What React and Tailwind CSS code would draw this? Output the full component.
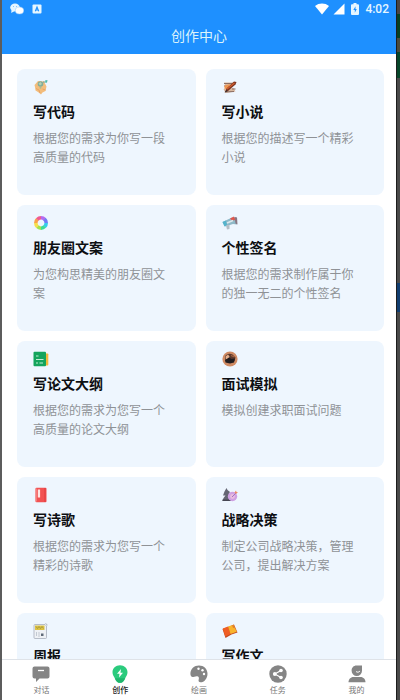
import { useState } from 'react'

function CodeIcon() {
  return (
    <svg viewBox="0 0 16 16" className="w-4 h-4" aria-hidden="true">
      <path d="M1.500 6 5 2l6 .5 2.500 5-1 4.500-3 1.500-1.500 2-3-2.500-2.500-1.500-.5-3.500z" fill="#f3bd7c" />
      <path d="M3 9.500l3 1.500 1 3M9.500 10l3 1" stroke="#e8a566" strokeWidth="1" fill="none" />
      <circle cx="7.500" cy="5" r="2.800" fill="#7fae9c" />
      <path d="M5.500 4.500l2-1.500 1.500 2-2 1.500z" fill="#b8cfae" />
      <circle cx="7.500" cy="8.800" r="1" fill="#a9bd92" />
      <path d="M12 1.500l2.500-.5-.5 2.500-1.500.5z" fill="#4cb9a8" />
      <circle cx="11" cy="3" r=".8" fill="#5b968c" />
    </svg>
  )
}

function NovelIcon() {
  return (
    <svg viewBox="0 0 16 16" className="w-4 h-4" aria-hidden="true">
      <path d="M2 3.500h11l-.5 2.500H3zM1.500 10l10-1 2 3.500-10 1.500z" fill="#d8b8a0" />
      <path d="M2 4.500h8M2 7h5M3 13l9-.5M10 10h3.500" stroke="#8b6d62" strokeWidth="1" />
      <path d="M2.500 6.500l6-1.500-2.500 4.500-3.500.5z" fill="#ef9550" />
      <path d="M3 13 4.500 9.500l7.500-7 2.500.5-1 2.500-7.500 6.500z" fill="#7c3520" />
      <path d="M5 10 12.500 4" stroke="#d35d2d" strokeWidth="1.200" />
      <path d="M2.500 13.500l2-2.500 1.200 1.200z" fill="#332c2b" />
    </svg>
  )
}

function MomentsIcon() {
  return (
    <svg viewBox="0 0 16 16" className="w-4 h-4" fill="none" strokeWidth="3.600" aria-hidden="true">
      <path d="M8 2.800a5.200 5.200 0 0 1 3.800 1.600" stroke="#b56bf0" />
      <path d="M11.500 4.200A5.200 5.200 0 0 1 13.200 8" stroke="#6f7df5" />
      <path d="M13.200 8a5.200 5.200 0 0 1-1.600 3.800" stroke="#35cdea" />
      <path d="M11.700 11.600A5.200 5.200 0 0 1 8 13.200" stroke="#3ddc97" />
      <path d="M8 13.200a5.200 5.200 0 0 1-3.700-1.600" stroke="#a5e24d" />
      <path d="M4.400 11.700A5.200 5.200 0 0 1 2.800 8" stroke="#f7df4b" />
      <path d="M2.800 8a5.200 5.200 0 0 1 1.600-3.700" stroke="#f9a14a" />
      <path d="M4.300 4.400A5.200 5.200 0 0 1 8 2.800" stroke="#ef5b91" />
    </svg>
  )
}

function SignatureIcon() {
  return (
    <svg viewBox="0 0 16 16" className="w-4 h-4" aria-hidden="true">
      <path d="M.5 7l9.500-4.500 4.500 0 .5 7-4-.5-8 2.500z" fill="#8fb9c8" />
      <path d="M.5 7l3.500-1.500 1 4.500-2.500 1.500z" fill="#55b4cc" />
      <path d="M8 3.500l4-2 1.500 3.500-3.500.5z" fill="#e0574c" />
      <path d="M12.500 2l2.500.5.500 7-2-1z" fill="#8a7682" />
      <path d="M5 8l6-2.500" stroke="#dce8ec" strokeWidth="1.500" />
      <path d="M4 10.500l1 4 2.500-.5L7.500 10z" fill="#b5bec5" />
    </svg>
  )
}

function OutlineIcon() {
  return (
    <svg viewBox="0 0 16 16" className="w-4 h-4" aria-hidden="true">
      <path d="M11 2.500h3.500a.8.8 0 0 1 .8.800v10.500a.8.8 0 0 1-.8.800H11z" fill="#f2b83a" />
      <rect x=".5" y=".8" width="12.500" height="14.400" rx="1" fill="#14a45c" />
      <path d="M3 5h2.500M3 8.500h7.500M3 12h2M6.500 12H10" stroke="#c2ebd2" strokeWidth="1.100" />
    </svg>
  )
}

function InterviewIcon() {
  return (
    <svg viewBox="0 0 16 16" className="w-4 h-4" aria-hidden="true">
      <circle cx="8" cy="8" r="7.600" fill="#cf8a63" />
      <path d="M3 5.500C4.500 2.500 8 2 10.500 3.500l3 3-1 3.500-4.500 1-4.500-1z" fill="#5a382c" />
      <path d="M3.500 5.500l2.500-2 1.500 2-1 2.500-2.500.5z" fill="#e6b08c" />
      <path d="M3 9l4-2.500L9.500 8l3.500-.5-1 4-4 1-4.500-1z" fill="#211d20" />
      <path d="M9 4.500l3.500 1.500" stroke="#a66241" strokeWidth="1.200" />
    </svg>
  )
}

function PoemIcon() {
  return (
    <svg viewBox="0 0 16 16" className="w-4 h-4" aria-hidden="true">
      <rect x="2.500" y=".8" width="11" height="14.400" rx="1" fill="#f25252" />
      <path d="M2.500 1.500h1.300v13H2.500z" fill="#f58787" />
      <rect x="4.800" y="2.500" width="2.300" height="8" fill="#ffe4e1" />
      <path d="M12 1v14" stroke="#df3b3f" strokeWidth="1" />
    </svg>
  )
}

function StrategyIcon() {
  return (
    <svg viewBox="0 0 16 16" className="w-4 h-4" aria-hidden="true">
      <path d="M4.500 1l1 2 2.500 2-1 1.500 1.500 5.500 1 2H.5l1-3L3.500 8.500 1 8.500l1.500-4z" fill="#646573" />
      <path d="M.5 12.500h8V14h-8z" fill="#464753" />
      <circle cx="10.500" cy="9.500" r="4.700" fill="#cfa0e2" />
      <circle cx="10.500" cy="9.500" r="2.400" fill="#e9bcdf" />
      <path d="M10 10l4.500-4.500" stroke="#9a6cc0" strokeWidth=".9" />
      <path d="M12.500 5.500l1.500-2 .5 1.500 1.500.3-2 1.700z" fill="#ee8a66" />
    </svg>
  )
}

function ReportIcon() {
  return (
    <svg viewBox="0 0 16 16" className="w-4 h-4" aria-hidden="true">
      <path d="M2 1.500h10l1.500 1.500v11.500a1 1 0 0 1-1 1H2a1 1 0 0 1-1-1v-12a1 1 0 0 1 1-1z" fill="#eef1f5" stroke="#a7afbb" strokeWidth=".8" />
      <path d="M2 2.500h9.500v4.500H2z" fill="#ddc344" />
      <path d="M3 3.500l1.500 2L6 3.500l1.500 2L9 3.500l1.500 2" stroke="#9c9140" strokeWidth=".8" fill="none" />
      <path d="M3.500 9v4M6 9v5" stroke="#bcc4ce" strokeWidth=".9" />
      <path d="M8 10.500h2.500V13H8z" fill="#5f6a78" />
      <path d="M12.500.5l2 1.500" stroke="#a8afb8" strokeWidth="1" />
    </svg>
  )
}

function EssayIcon() {
  return (
    <svg viewBox="0 0 16 16" className="w-4 h-4" aria-hidden="true">
      <path d="M.5 6 6 4l6-2.500 3.500 8-6 2-6 3.500z" fill="#c44a20" />
      <path d="M.8 5.500 6 3.500l2.500 7.500L3.300 13.500z" fill="#ef5e24" />
      <path d="M6 3.500 11.500 1.800l3.300 7-6.300 2.200z" fill="#f9b42d" />
      <path d="M10 2.300l1 2.500 2 .5-1.500-3.500z" fill="#e17e2a" />
    </svg>
  )
}

function ChatIcon() {
  return (
    <svg viewBox="0 0 18 18" className="w-[18px] h-[18px]" aria-hidden="true">
      <path d="M2.500 1.500h13a2 2 0 0 1 2 2v8a2 2 0 0 1-2 2H7.500L4 17v-3.500H2.500a2 2 0 0 1-2-2v-8a2 2 0 0 1 2-2z" fill="#858585" />
      <path d="M6 5.500h6" stroke="#fff" strokeWidth="1.300" />
    </svg>
  )
}

function CreateIcon() {
  return (
    <svg viewBox="0 0 18 18" className="w-[18px] h-[18px]" aria-hidden="true">
      <path d="M9 .3c4.300 0 7.500 3 7.500 7 0 2.500-1.300 4-2.300 6-.8 1.500-1.200 2.500-2 3.200-.7.900-1.700 1.200-3.200 1.200s-2.500-.3-3.200-1.200c-.8-.7-1.200-1.700-2-3.200-1-2-2.300-3.500-2.300-6 0-4 3.200-7 7.500-7z" fill="#2bcb7d" />
      <path d="M9 17.700c1.500 0 2.500-.3 3.200-1.200.8-.7 1.200-1.700 2-3.200H3.800c.8 1.500 1.200 2.500 2 3.200.7.900 1.700 1.200 3.200 1.200z" fill="#1fb56c" />
      <path d="M10 4 6 8.700h2.500L8 12.500l4-4.800H9.500z" fill="#fff" />
    </svg>
  )
}

function PaintIcon() {
  return (
    <svg viewBox="0 0 18 18" className="w-[18px] h-[18px]" aria-hidden="true">
      <path d="M9 .5c4.800 0 8.500 3.500 8.500 8.200 0 4.800-3.200 8.600-7 8.600-1.700 0-2.300-1.300-1.800-2.800.7-2-.2-3.500-2-3.200l-3.500.7C1.300 12.300.4 10.600.4 8.700.4 4 4.200.5 9 .5z" fill="#858585" />
      <circle cx="8.500" cy="3.700" r="1.200" fill="#fff" />
      <circle cx="12.500" cy="5.300" r="1.200" fill="#fff" />
      <circle cx="14" cy="9" r="1.200" fill="#fff" />
    </svg>
  )
}

function TaskIcon() {
  return (
    <svg viewBox="0 0 18 18" className="w-[18px] h-[18px]" aria-hidden="true">
      <circle cx="9" cy="9" r="8.700" fill="#858585" />
      <path d="M12 5.500 5.800 9l6.200 3.500" stroke="#fff" strokeWidth="1.200" fill="none" />
      <circle cx="12" cy="5.500" r="1.800" fill="#fff" />
      <circle cx="5.800" cy="9" r="1.900" fill="#fff" />
      <circle cx="12" cy="12.500" r="1.800" fill="#fff" />
    </svg>
  )
}

function MineIcon() {
  return (
    <svg viewBox="0 0 18 18" className="w-[18px] h-[18px]" aria-hidden="true">
      <path d="M8.500.5H14v5.200a5.200 5.200 0 0 1-10.400 0C3.600 2.700 5.600.5 8.500.5z" fill="#858585" />
      <path d="M8 6.500c1.300 1 2.700 1 4-.5" stroke="#fff" strokeWidth=".9" fill="none" />
      <path d="M.5 17.300c0-3 2-5.300 5-5.300h7c3 0 5 2.300 5 5.300z" fill="#858585" />
    </svg>
  )
}

const CARDS = [
  { title: '写代码',     desc: '根据您的需求为你写一段高质量的代码',       Icon: CodeIcon },
  { title: '写小说',     desc: '根据您的描述写一个精彩小说',               Icon: NovelIcon },
  { title: '朋友圈文案', desc: '为您构思精美的朋友圈文案',                 Icon: MomentsIcon },
  { title: '个性签名',   desc: '根据您的需求制作属于你的独一无二的个性签名', Icon: SignatureIcon },
  { title: '写论文大纲', desc: '根据您的需求为您写一个高质量的论文大纲',   Icon: OutlineIcon },
  { title: '面试模拟',   desc: '模拟创建求职面试问题',                     Icon: InterviewIcon },
  { title: '写诗歌',     desc: '根据您的需求为您写一个精彩的诗歌',         Icon: PoemIcon },
  { title: '战略决策',   desc: '制定公司战略决策，管理公司，提出解决方案', Icon: StrategyIcon },
  { title: '周报',       desc: '',                                         Icon: ReportIcon },
  { title: '写作文',     desc: '',                                         Icon: EssayIcon },
]

const TABS = [
  { id: 'chat',   label: '对话', Icon: ChatIcon },
  { id: 'create', label: '创作', Icon: CreateIcon },
  { id: 'paint',  label: '绘画', Icon: PaintIcon },
  { id: 'task',   label: '任务', Icon: TaskIcon },
  { id: 'mine',   label: '我的', Icon: MineIcon },
]

function StatusBar() {
  return (
    <div className="flex items-center justify-between h-[18px] pl-2 pr-[7px]">
      <div className="flex items-center gap-2">
        <svg viewBox="0 0 14 12" className="w-3.5 h-3" aria-hidden="true">
          <ellipse cx="5" cy="4.500" rx="4.800" ry="4" fill="#e6f6ff" />
          <path d="M1.500 7l-.3 3 3-1.800z" fill="#e6f6ff" />
          <ellipse cx="9.500" cy="7.500" rx="4.200" ry="3.500" fill="#fff" stroke="#8cc6ff" strokeWidth=".5" />
          <circle cx="3.500" cy="3.500" r=".5" fill="#6cb5fa" />
          <circle cx="6.500" cy="3.500" r=".5" fill="#6cb5fa" />
        </svg>
        <svg viewBox="0 0 10 10" className="w-2.5 h-2.5" aria-hidden="true">
          <rect x=".5" y=".5" width="9" height="9" rx="1" fill="#e6f6ff" />
          <path d="M3.300 7.300 5 3l1.700 4.300M3.900 6h2.200" stroke="#1e90ff" strokeWidth="1.100" fill="none" />
        </svg>
      </div>
      <div className="flex items-center gap-1">
        <svg viewBox="0 0 14 12" className="w-3.5 h-3" aria-hidden="true">
          <path d="M0 3C4-.3 10-.3 14 3L7 11.500z" fill="#fff" />
        </svg>
        <svg viewBox="0 0 12 12" className="w-3 h-3" aria-hidden="true">
          <path d="M11.500.5v11H.5z" fill="#fff" />
        </svg>
        <svg viewBox="0 0 12 12" className="w-3 h-3" aria-hidden="true">
          <path d="M4.500 0h3v1.200H9a1 1 0 0 1 1 1V11a1 1 0 0 1-1 1H3a1 1 0 0 1-1-1V2.200a1 1 0 0 1 1-1h1.500z" fill="#e6f6ff" />
          <path d="M6.500 3.300 4.300 7h1.500v2.700L7.800 6H6.500z" fill="#1e90ff" />
        </svg>
        <span className="text-xs leading-[18px] font-medium text-[#e6f6ff] font-[Roboto,sans-serif]">4:02</span>
      </div>
    </div>
  )
}

function Card({ title, desc, Icon }) {
  return (
    <article className="h-[126px] rounded-lg bg-[#eef6fe] pt-2.5 pl-4 pr-5">
      <Icon />
      <h2 className="mt-[5px] text-sm leading-[22px] font-bold text-[#0d0f12]">{title}</h2>
      <p className="mt-1.5 text-xs leading-[19px] text-[#8f9296]">{desc}</p>
    </article>
  )
}

export default function App() {
  const [tab, setTab] = useState('create')

  return (
    <div className="flex h-screen bg-[#4a4a4a] font-['Noto_Sans_CJK_SC',sans-serif]">
      {/* Left edge */}
      <div className="w-0.5 shrink-0 bg-[#5c5c5c]" />

      <div className="flex flex-1 min-w-0 flex-col bg-white">
        <header className="shrink-0 bg-[#1e90ff]">
          <StatusBar />
          <h1 className="h-9 text-center text-sm leading-[34px] text-[#dcf3fb]">创作中心</h1>
        </header>

        <main className="flex-1 min-h-0 overflow-y-auto [scrollbar-width:none] pt-[15px] pl-[15px] pr-3">
          <div className="grid grid-cols-2 gap-2.5">
            {CARDS.map(c => <Card key={c.title} {...c} />)}
          </div>
        </main>

        <nav className="flex shrink-0 border-t border-[#dfe3e8] bg-white">
          {TABS.map(({ id, label, Icon }) => (
            <button
              key={id}
              type="button"
              onClick={() => setTab(id)}
              className={`flex flex-1 flex-col items-center pt-[5px] pb-1 text-[8px] leading-[13px] ${tab === id ? 'font-medium text-[#222]' : 'text-[#777]'}`}
            >
              <Icon />
              {label}
            </button>
          ))}
        </nav>
      </div>

      {/* Right edge, with what lies behind showing through */}
      <div className="flex w-1 shrink-0 flex-col border-l border-[#1d1d1d]">
        <div className="h-3.5 bg-[#4a4442]" />
        <div className="h-6 bg-[#063f22]" />
        <div className="h-3.5 bg-[#4b4a3c]" />
        <div className="h-[26px] bg-[#07462a]" />
        <div className="h-[205px]" />
        <div className="h-[29px] bg-[#123e70]" />
      </div>
    </div>
  )
}
